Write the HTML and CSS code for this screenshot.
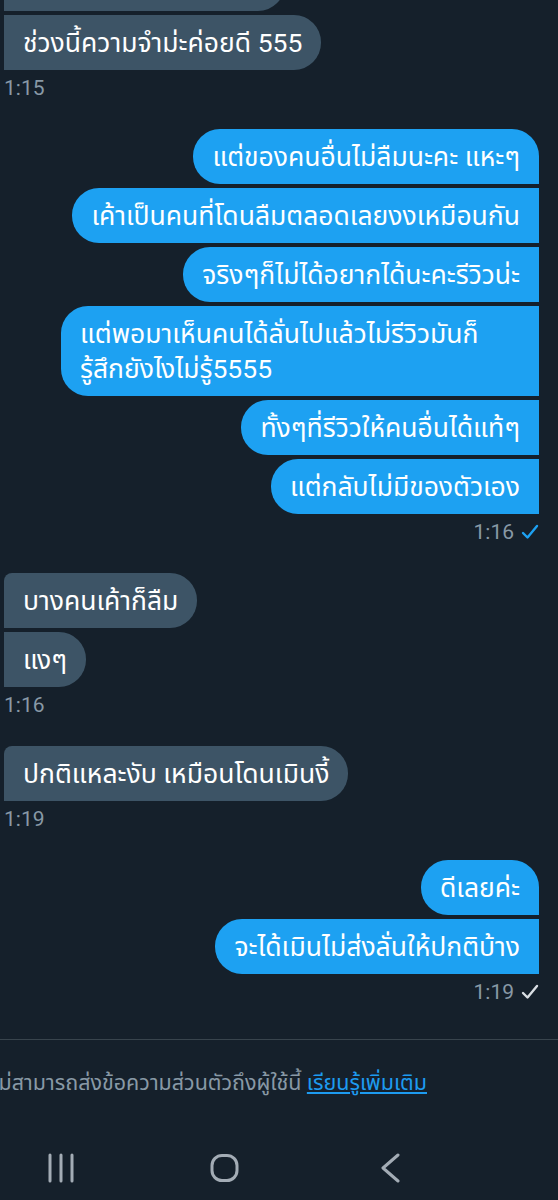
FILE: index.html
```html
<!DOCTYPE html>
<html lang="th">
<head>
<meta charset="utf-8">
<title>Direct messages</title>
<link rel="stylesheet" href="styles.css">
</head>
<body>
<div class="screen">
  <main class="chat">
    <section class="group recv">
      <div class="bubble cut"></div>
      <div class="bubble">ช่วงนี้ความจำม่ะค่อยดี 555</div>
      <div class="time">1:15</div>
    </section>

    <section class="group sent">
      <div class="bubble first">แต่ของคนอื่นไม่ลืมนะคะ แหะๆ</div>
      <div class="bubble">เค้าเป็นคนที่โดนลืมตลอดเลยงงเหมือนกัน</div>
      <div class="bubble">จริงๆก็ไม่ได้อยากได้นะคะรีวิวน่ะ</div>
      <div class="bubble wide">แต่พอมาเห็นคนได้ลั่นไปแล้วไม่รีวิวมันก็<br>รู้สึกยังไงไม่รู้5555</div>
      <div class="bubble">ทั้งๆที่รีวิวให้คนอื่นได้แท้ๆ</div>
      <div class="bubble">แต่กลับไม่มีของตัวเอง</div>
      <div class="time">1:16
        <svg class="check read" viewBox="0 0 18 16" width="18" height="16"><path d="M2 9 L6.5 13.5 L16 2" fill="none" stroke="currentColor" stroke-width="2.4" stroke-linecap="round" stroke-linejoin="round"/></svg>
      </div>
    </section>

    <section class="group recv">
      <div class="bubble first">บางคนเค้าก็ลืม</div>
      <div class="bubble">แงๆ</div>
      <div class="time">1:16</div>
    </section>

    <section class="group recv">
      <div class="bubble first">ปกติแหละงับ เหมือนโดนเมินงี้</div>
      <div class="time">1:19</div>
    </section>

    <section class="group sent">
      <div class="bubble first">ดีเลยค่ะ</div>
      <div class="bubble">จะได้เมินไม่ส่งลั่นให้ปกติบ้าง</div>
      <div class="time">1:19
        <svg class="check" viewBox="0 0 18 16" width="18" height="16"><path d="M2 9 L6.5 13.5 L16 2" fill="none" stroke="currentColor" stroke-width="2.4" stroke-linecap="round" stroke-linejoin="round"/></svg>
      </div>
    </section>
  </main>

  <div class="divider"></div>

  <div class="notice">
    <p class="notice-text">คุณไม่สามารถส่งข้อความส่วนตัวถึงผู้ใช้นี้ <a href="#" class="link">เรียนรู้เพิ่มเติม</a></p>
  </div>

  <nav class="navbar">
    <svg class="nav-icon" viewBox="0 0 40 30" width="40" height="30"><path d="M9 2 V28 M20 2 V28 M31 2 V28" stroke="currentColor" stroke-width="3" stroke-linecap="round" fill="none"/></svg>
    <svg class="nav-icon" viewBox="0 0 40 30" width="40" height="30"><rect x="6" y="2.5" width="25" height="25" rx="10" ry="10" stroke="currentColor" stroke-width="3" fill="none"/></svg>
    <svg class="nav-icon" viewBox="0 0 40 30" width="40" height="30"><path d="M27 2 L12 15 L27 28" stroke="currentColor" stroke-width="3" stroke-linecap="round" stroke-linejoin="round" fill="none"/></svg>
  </nav>
</div>
</body>
</html>
```

FILE: styles.css
```css
html, body {
  margin: 0;
  padding: 0;
  background: #15202b;
}

body {
  width: 558px;
  height: 1200px;
  overflow: hidden;
  font-family: Roboto, "Noto Sans Thai", "Noto Sans Thai UI", "Noto Sans", sans-serif;
}

.screen {
  display: flex;
  flex-direction: column;
  height: 1200px;
  overflow: hidden;
}

.chat {
  display: flex;
  flex-direction: column;
  gap: 29px;
  padding: 0 19px 0 4px;
  margin-top: -44px;
}

.group {
  display: flex;
  flex-direction: column;
  gap: 4px;
}

.group.recv {
  align-items: flex-start;
}

.group.sent {
  align-items: flex-end;
}

.bubble {
  box-sizing: border-box;
  padding: 10px 19px;
  line-height: 35px;
  font-size: 26.5px;
  color: #ffffff;
  white-space: nowrap;
}

.bubble.wide {
  width: 478px;
}

.recv .bubble {
  background: #3d5466;
  border-radius: 0 27px 27px 0;
}

.recv .bubble.first {
  border-top-left-radius: 8px;
}

.recv .bubble.cut {
  width: 281px;
  height: 55px;
  padding: 0;
}

.sent .bubble {
  background: #1da1f2;
  border-radius: 27px 0 0 27px;
}

.sent .bubble.first {
  border-top-right-radius: 27px;
}

.time {
  display: flex;
  align-items: center;
  gap: 7px;
  margin-top: 2px;
  font-size: 21px;
  line-height: 24px;
  color: #8899a6;
}

.check {
  color: #d9dee3;
}

.check.read {
  color: #1da1f2;
}

.divider {
  height: 1px;
  background: #38444d;
  margin-top: 35px;
}

.notice {
  display: flex;
  justify-content: flex-end;
  padding: 29px 131px 0 0;
  overflow: hidden;
}

.notice-text {
  margin: 0;
  white-space: nowrap;
  font-size: 21.5px;
  line-height: 28px;
  color: #8899a6;
}

.link {
  color: #1d9bf0;
  text-decoration: underline;
}

.navbar {
  display: grid;
  grid-template-columns: repeat(3, 40px);
  column-gap: 125px;
  padding: 56px 0 0 41px;
  color: #a3acb5;
}

.nav-icon {
  display: block;
}
```
